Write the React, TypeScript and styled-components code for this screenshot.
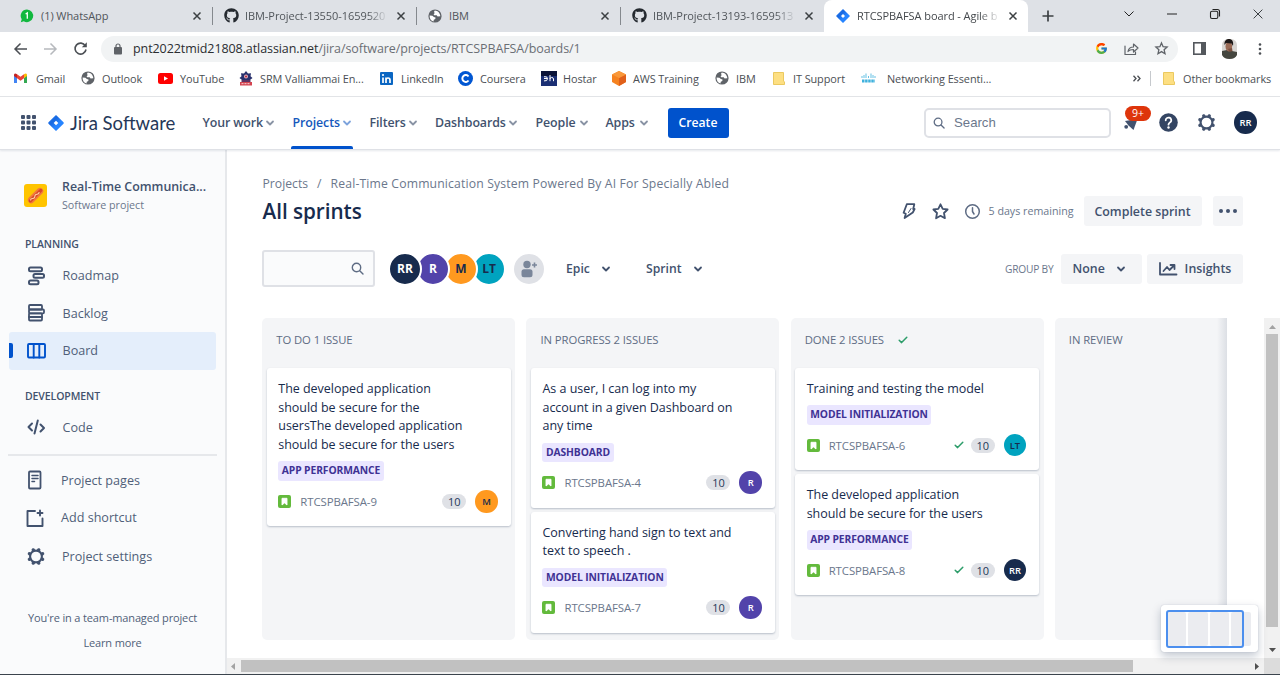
import React from "react";
import styled, { createGlobalStyle, css } from "styled-components";
import { FaGithub } from "react-icons/fa";
import { FcGoogle } from "react-icons/fc";

const navy = "#42526e";
const ink = "#172b4d";
const sans = `"Open Sans", "Noto Sans", sans-serif`;

const GlobalStyle = createGlobalStyle`
  *, *::before, *::after { box-sizing: border-box; }
  html, body { margin: 0; padding: 0; overflow: hidden; background: #fff; }
  body { font-family: ${sans}; font-size: 12.4px; color: ${ink}; }
  svg { display: block; flex: none; overflow: visible; }
`;

const Window = styled.div`
  width: 1280px;
  height: 675px;
  display: flex;
  flex-direction: column;
  border-bottom: 1px solid #3b444d;
  white-space: nowrap;
  overflow: hidden;
`;

/* ---------- browser chrome ---------- */

const TabStrip = styled.div`
  height: 32px;
  flex: none;
  background: #dee1e6;
  display: flex;
  align-items: stretch;
  padding-left: 8px;
`;

const Tab = styled.div<{ $active?: boolean; $sep?: boolean }>`
  width: 204px;
  display: flex;
  align-items: center;
  padding: 0 10px 1px 11px;
  color: #50555a;
  font-size: 11px;
  position: relative;
  ${(p) =>
    p.$active &&
    css`
      background: #fff;
      border-radius: 8px 8px 0 0;
      color: #45494d;
    `}
  ${(p) =>
    p.$sep &&
    css`
      &::after {
        content: "";
        position: absolute;
        right: -1px;
        top: 7px;
        width: 1px;
        height: 18px;
        background: #85898e;
      }
    `}
`;

const Favicon = styled.span`
  width: 16px;
  display: flex;
  justify-content: center;
  margin-right: 6px;
`;

const TabTitle = styled.span<{ $fade?: boolean }>`
  width: 146px;
  overflow: hidden;
  letter-spacing: -0.07px;
  ${(p) =>
    p.$fade &&
    css`
      mask-image: linear-gradient(90deg, #000 84%, transparent 98%);
    `}
`;

const TabClose = styled.span`
  margin-left: auto;
  padding-right: 1px;
`;

const NewTab = styled.span`
  margin-left: 14px;
  display: flex;
  align-items: center;
`;

const WindowControls = styled.div`
  margin-left: auto;
  width: 173px;
  height: 27px;
  display: flex;
  & > span {
    width: 43px;
    display: flex;
    align-items: center;
    justify-content: center;
  }
`;

const Toolbar = styled.div`
  height: 33px;
  flex: none;
  display: flex;
  align-items: center;
  padding-left: 12px;
`;

const ToolbarIcon = styled.span<{ $w: number }>`
  width: ${(p) => p.$w}px;
  display: flex;
  justify-content: center;
`;

const AddressBar = styled.div`
  width: 1077px;
  height: 26px;
  border-radius: 13px;
  background: #f1f3f4;
  display: flex;
  align-items: center;
  padding-left: 12px;
  margin-right: 6px;
`;

const Url = styled.span`
  margin-left: 10px;
  font-size: 12.5px;
  letter-spacing: -0.08px;
  color: #6b6f74;
  flex: 1;
  b {
    font-weight: 400;
    color: #2b2e31;
  }
`;

const BookmarksBar = styled.div`
  height: 32px;
  flex: none;
  display: flex;
  align-items: center;
  padding: 0 0 5px 12px;
  border-bottom: 1px solid #e3e5e8;
`;

const Bookmark = styled.div<{ $w: number; $gap?: number; $ls?: number }>`
  width: ${(p) => p.$w}px;
  display: flex;
  align-items: center;
  color: #4b4f54;
  font-size: 10.9px;
  letter-spacing: ${(p) => p.$ls ?? -0.08}px;
  & > span:first-child {
    width: 17px;
    display: flex;
    justify-content: center;
    margin-right: ${(p) => p.$gap ?? 6}px;
  }
`;

const BookmarkTail = styled.div`
  margin-left: auto;
  display: flex;
  align-items: center;
`;

const BarDivider = styled.i`
  width: 1px;
  height: 15px;
  background: #c6c9cd;
  margin: 0 9px 0 9px;
`;

/* ---------- product navigation ---------- */

const TopNav = styled.header`
  height: 53px;
  flex: none;
  display: flex;
  align-items: center;
  border-bottom: 1px solid #dfe1e6;
  box-shadow: 0 1px 2px rgba(9, 30, 66, 0.1);
  padding: 0 0 1px 21px;
  position: relative;
`;

const Logo = styled.div`
  display: flex;
  align-items: center;
  width: 154.5px;
  margin-left: 12px;
  font: 400 18.5px Lato, sans-serif;
  color: #253858;
  gap: 6px;
`;

const NavItem = styled.div<{ $w: number; $active?: boolean }>`
  width: ${(p) => p.$w}px;
  height: 100%;
  display: flex;
  align-items: center;
  font-weight: 600;
  font-size: 12.4px;
  letter-spacing: -0.1px;
  color: ${(p) => (p.$active ? "#1558bc" : "#42526e")};
  position: relative;
  svg {
    margin-left: auto;
  }
  ${(p) =>
    p.$active &&
    css`
      &::after {
        content: "";
        position: absolute;
        left: -2px;
        right: -2px;
        bottom: -1px;
        height: 3px;
        border-radius: 2px 2px 0 0;
        background: #0052cc;
      }
    `}
`;

const NavSlot = styled.div<{ $gap: number }>`
  height: 100%;
  margin-right: ${(p) => p.$gap}px;
`;

const CreateButton = styled.button`
  width: 61px;
  height: 30px;
  padding: 0;
  border: 0;
  border-radius: 3px;
  background: #0052cc;
  color: #fff;
  font: 600 12.2px ${sans};
`;

const GlobalSearch = styled.div`
  width: 187px;
  height: 30px;
  margin-left: auto;
  border: 2px solid #dfe1e6;
  border-radius: 5px;
  display: flex;
  align-items: center;
  gap: 9px;
  padding-left: 7px;
  font: 13.2px "Liberation Sans", Arial, sans-serif;
  color: #6b778c;
`;

const NavActions = styled.div`
  width: 169px;
  display: flex;
  align-items: center;
  padding-left: 1.5px;
`;

const NavAction = styled.span<{ $w?: number }>`
  width: ${(p) => p.$w ?? 37.5}px;
  display: flex;
  justify-content: center;
  position: relative;
`;

const Notice = styled.span`
  position: absolute;
  left: 12.5px;
  top: -8.5px;
  width: 26px;
  height: 15px;
  border-radius: 8px;
  background: #de350b;
  color: #fff;
  font-size: 10.5px;
  line-height: 15px;
  text-align: center;
`;

/* ---------- sidebar ---------- */

const Body = styled.div`
  flex: 1;
  min-height: 0;
  display: flex;
`;

const Sidebar = styled.aside`
  width: 227px;
  background: #fafbfc;
  border-right: 2px solid #e6e8eb;
  display: flex;
  flex-direction: column;
  padding-top: 26px;
`;

const ProjectHeader = styled.div`
  height: 38px;
  display: flex;
  align-items: center;
  padding-left: 24px;
  gap: 15px;
`;

const ProjectName = styled.div`
  line-height: 18px;
  padding-top: 2px;
  font-weight: 600;
  font-size: 12.4px;
  color: ${navy};
  small {
    display: block;
    font-weight: 400;
    font-size: 10.7px;
    color: #6b778c;
  }
`;

const SectionLabel = styled.div<{ $top: number }>`
  margin-top: ${(p) => p.$top}px;
  height: 18px;
  line-height: 18px;
  padding-left: 25px;
  font-size: 10.5px;
  font-weight: 600;
  color: ${navy};
  letter-spacing: -0.1px;
`;

const SideItem = styled.div<{ $active?: boolean; $first?: boolean; $indent?: number; $h?: number }>`
  height: ${(p) => p.$h ?? 37.5}px;
  margin: ${(p) => (p.$first ? 4 : 0)}px 9px 0;
  padding-left: 16px;
  display: flex;
  align-items: center;
  flex: none;
  font-size: 12.6px;
  color: #505f79;
  border-radius: 3px;
  position: relative;
  svg {
    width: 22px;
    margin-right: ${(p) => p.$indent ?? 15.5}px;
  }
  ${(p) =>
    p.$active &&
    css`
      background: #e4eefb;
      &::before {
        content: "";
        position: absolute;
        left: 0;
        top: 11px;
        width: 4px;
        height: 15px;
        border-radius: 0 2px 2px 0;
        background: #0052cc;
      }
    `}
`;

const SideRule = styled.hr`
  width: 209px;
  height: 2px;
  flex: none;
  margin: 7.5px 0 6px 8px;
  border: 0;
  background: #e6e8eb;
`;

const SideFooter = styled.div`
  margin-top: 28px;
  text-align: center;
  font-size: 11px;
  letter-spacing: -0.14px;
  line-height: 25px;
  color: #505f79;
`;

/* ---------- main area ---------- */

const Main = styled.main`
  flex: 1;
  min-width: 0;
  display: flex;
  flex-direction: column;
`;

const Breadcrumbs = styled.nav`
  height: 18px;
  margin: 24.5px 0 0 35.5px;
  line-height: 18px;
  font-size: 12.2px;
  color: #6b778c;
  i {
    font-style: normal;
    margin: 0 9px;
  }
`;

const ProjectCrumb = styled.span`
  letter-spacing: 0.16px;
`;

const TitleRow = styled.div`
  height: 37px;
  padding: 0 37px 0 35.5px;
  display: flex;
  align-items: center;
`;

const Title = styled.h1`
  margin: 0;
  flex: 1;
  font-size: 20.7px;
  font-weight: 600;
  letter-spacing: -0.03px;
  color: ${ink};
`;

const Remaining = styled.span`
  width: 95px;
  font-size: 10.7px;
  color: #6b778c;
`;

const SubtleButton = styled.button<{ $w: number; $ml?: number; $menu?: boolean }>`
  width: ${(p) => p.$w}px;
  height: 30px;
  margin-left: ${(p) => p.$ml ?? 0}px;
  padding: ${(p) => (p.$menu ? "0 17px 0 11.5px" : "0")};
  border: 0;
  border-radius: 3px;
  background: #f4f5f7;
  color: ${navy};
  font: 600 12.4px ${sans};
  display: flex;
  align-items: center;
  justify-content: ${(p) => (p.$menu ? "space-between" : "center")};
  gap: 8px;
`;

const FilterRow = styled.div`
  height: 38px;
  margin-top: 20px;
  padding: 0 37px 0 35px;
  display: flex;
  align-items: center;
`;

const FilterSearch = styled.div`
  width: 113px;
  height: 37px;
  border: 2px solid #dfe1e6;
  border-radius: 3px;
  background: #fafbfc;
  display: flex;
  align-items: center;
  justify-content: flex-end;
  padding-right: 9px;
  margin-right: 13px;
`;

const People = styled.div`
  display: flex;
  margin-right: 14px;
`;

const Person = styled.span<{ $bg: string; $dark?: boolean; $z: number }>`
  width: 34px;
  height: 34px;
  margin-right: -6px;
  border: 2px solid #fff;
  border-radius: 50%;
  background: ${(p) => p.$bg};
  color: ${(p) => (p.$dark ? ink : "#fff")};
  font-size: 12px;
  font-weight: 700;
  display: flex;
  align-items: center;
  justify-content: center;
  position: relative;
  z-index: ${(p) => p.$z};
`;

const AddPerson = styled.span`
  width: 30px;
  height: 30px;
  border-radius: 50%;
  background: #dfe1e6;
  display: flex;
  align-items: center;
  justify-content: center;
  margin-right: 22px;
`;

const FilterMenu = styled.div<{ $w: number }>`
  width: ${(p) => p.$w}px;
  margin-right: 36.5px;
  display: flex;
  align-items: center;
  justify-content: space-between;
  font-weight: 600;
  font-size: 12.2px;
  color: ${navy};
`;

const GroupBy = styled.span`
  margin-left: auto;
  font-size: 10.2px;
  letter-spacing: -0.2px;
  color: #6b778c;
  margin-right: 7.5px;
`;

/* ---------- board ---------- */

const BoardArea = styled.section`
  flex: 1;
  min-height: 0;
  margin-top: 30.5px;
  display: flex;
`;

const BoardScroll = styled.div`
  width: 1037px;
  display: flex;
  flex-direction: column;
  position: relative;
`;

const Columns = styled.div`
  width: 999.5px;
  height: 321.5px;
  padding-left: 35.3px;
  display: flex;
  gap: 11.2px;
  overflow: hidden;
  position: relative;
  &::after {
    content: "";
    position: absolute;
    right: 0;
    top: 0;
    bottom: 0;
    width: 10px;
    background: linear-gradient(90deg, rgba(9, 30, 66, 0), rgba(9, 30, 66, 0.1));
  }
`;

const Column = styled.div`
  width: 253px;
  flex: none;
  background: #f4f5f7;
  border-radius: 5px;
  padding: 0 4.5px;
`;

const ColumnTitle = styled.h2`
  margin: 0;
  height: 50px;
  padding: 0 0 7px 9.5px;
  display: flex;
  align-items: center;
  gap: 14px;
  font-size: 11.3px;
  font-weight: 500;
  letter-spacing: -0.08px;
  color: #5e6c84;
`;

const CardBox = styled.article`
  background: #fff;
  border-radius: 3px;
  box-shadow: 0 1px 2px rgba(9, 30, 66, 0.25);
  padding: 12px 13px 14px 11.5px;
  margin-bottom: 4px;
`;

const Summary = styled.div`
  font-size: 12.5px;
  line-height: 18.7px;
  letter-spacing: -0.03px;
  color: ${ink};
`;

const Epic = styled.div`
  width: fit-content;
  height: 19.5px;
  line-height: 19px;
  margin-top: 6.5px;
  padding: 0 3.5px;
  border-radius: 3px;
  background: #eae6ff;
  color: #403294;
  font-size: 10.3px;
  font-weight: 700;
  letter-spacing: -0.1px;
`;

const CardFooter = styled.div`
  height: 22px;
  margin-top: 9.5px;
  display: flex;
  align-items: center;
`;

const IssueKey = styled.span`
  margin-left: 9px;
  flex: 1;
  font-size: 11.4px;
  letter-spacing: -0.09px;
  color: #6b778c;
`;

const Points = styled.span`
  width: 24px;
  height: 15px;
  border-radius: 8px;
  background: #dfe1e6;
  font-size: 11px;
  line-height: 15px;
  text-align: center;
  margin: 0 9px 0 7px;
  color: #253858;
`;

const Assignee = styled.span<{ $bg: string; $dark?: boolean }>`
  width: 22.5px;
  height: 22.5px;
  border-radius: 50%;
  background: ${(p) => p.$bg};
  color: ${(p) => (p.$dark ? ink : "#fff")};
  font-size: 9.4px;
  font-weight: 600;
  display: flex;
  align-items: center;
  justify-content: center;
`;

const HScroll = styled.div`
  margin-top: auto;
  height: 16px;
  background: #f1f1f1;
  display: flex;
  align-items: center;
  padding: 0 5px 0 3px;
  i {
    width: 892px;
    height: 12px;
    background: #c1c1c1;
    margin: 0 auto 0 6px;
  }
`;

const VScroll = styled.div`
  width: 16px;
  display: flex;
  flex-direction: column;
  align-items: center;
  background: #f1f1f1;
  padding-top: 6px;
  i {
    width: 12px;
    height: 293px;
    background: #c1c1c1;
    margin: 5px 0 20px;
  }
  b {
    width: 16px;
    height: 16px;
    margin-top: auto;
    background: #dcdcdc;
  }
`;

const MiniMap = styled.div`
  position: absolute;
  left: 934px;
  top: 287px;
  width: 97px;
  height: 47px;
  border-radius: 3px;
  background: #fff;
  box-shadow: 0 4px 10px rgba(9, 30, 66, 0.25), 0 0 1px rgba(9, 30, 66, 0.3);
  display: flex;
  align-items: center;
  gap: 2px;
  padding-left: 5.5px;
  i {
    width: 19.6px;
    height: 34px;
    border-radius: 2px;
    background: #ebecf0;
  }
  &::after {
    content: "";
    position: absolute;
    left: 5px;
    top: 4.5px;
    width: 77.5px;
    height: 38px;
    border: 2px solid #4c8fee;
    border-radius: 3px;
  }
`;

/* ---------- icons ---------- */

const line = { fill: "none", stroke: "currentColor", strokeLinecap: "round", strokeLinejoin: "round" } as const;

const Cross = ({ s = 8, w = 1.5 }: { s?: number; w?: number }) => (
  <svg width={s} height={s} viewBox="0 0 8 8" fill="none" stroke="#3c4043" strokeWidth={w}>
    <path d="M.5.5l7 7M7.5.5l-7 7" />
  </svg>
);

const Chevron = ({ c = navy, w = 1.8, s = 8 }: { c?: string; w?: number; s?: number }) => (
  <svg width={s} height={s} viewBox="0 0 8 8" fill="none" stroke={c} strokeWidth={w} strokeLinecap="round" strokeLinejoin="round">
    <path d="M1 2.5L4 5.5L7 2.5" />
  </svg>
);

const Globe = () => (
  <svg width="14" height="14" viewBox="0 0 14 14">
    <circle cx="7" cy="7" r="6.6" fill="#5f6368" />
    <path d="M1.600 6.500l2.800.2 1.500 1.400 1.600.4-.2 1.500-1.500.8-.3 1.700C3 11.900 1.400 9.500 1.600 6.500z" fill="#fff" />
    <path d="M6.800 1.600l-.9 1.300.9 1-1.200 1.300.6 1 2.500.1.9 1.300 2.700-.3C12.200 4.500 9.900 1.600 6.800 1.600z" fill="#fff" />
  </svg>
);

const JiraMark = ({ s = 15 }: { s?: number }) => (
  <svg width={s} height={s} viewBox="0 0 16 16">
    <defs>
      <linearGradient id="jm" x1="0" y1="0" x2="1" y2="1">
        <stop offset="0" stopColor="#2684ff" />
        <stop offset=".35" stopColor="#1868e0" />
        <stop offset=".6" stopColor="#2684ff" />
      </linearGradient>
    </defs>
    <path fillRule="evenodd" fill="url(#jm)" d="M8 0L15.500 7.300a1 1 0 010 1.400L8 16L.5 8.700a1 1 0 010-1.400zM8 5.700L5.700 8L8 10.300L10.300 8z" />
  </svg>
);

const Folder = () => (
  <svg width="12" height="13" viewBox="0 0 12 13">
    <path d="M.5.5h10v8.500l1 1v2.500H.5z" fill="#fddf82" stroke="#e9c455" strokeWidth=".9" />
  </svg>
);

const Magnifier = ({ s = 13 }: { s?: number }) => (
  <svg width={s} height={s} viewBox="0 0 13 13" {...line} stroke="#5e6c84" strokeWidth="1.400">
    <circle cx="5.500" cy="5.500" r="4.200" />
    <path d="M8.700 8.700L12 12" />
  </svg>
);

const Gear = ({ s = 19 }: { s?: number }) => (
  <svg width={s} height={s} viewBox="0 0 20 20" fill="none" stroke={navy}>
    <circle cx="10" cy="10" r="6.200" strokeWidth="2.200" />
    <g strokeWidth="3.600" strokeLinecap="round">
      {[22.5, 67.5, 112.5, 157.5, 202.5, 247.5, 292.5, 337.5].map((a) => (
        <path key={a} d="M10 2.500v.3" transform={`rotate(${a} 10 10)`} />
      ))}
    </g>
  </svg>
);

const Story = () => (
  <svg width="13" height="13" viewBox="0 0 13 13">
    <rect width="13" height="13" rx="2" fill="#63ba3c" />
    <path d="M4 3.300h5v6.700L6.500 7.900L4 10z" fill="#fff" stroke="#fff" strokeWidth=".9" strokeLinejoin="round" />
  </svg>
);

const Check = () => (
  <svg width="10" height="8" viewBox="0 0 10 8" {...line} stroke="#2d9d6a" strokeWidth="1.500">
    <path d="M1.200 4.300L3.600 6.600L8.800 1.200" />
  </svg>
);

const Arrow = ({ dir, c }: { dir: "up" | "down" | "left" | "right"; c: string }) => {
  const d = { up: "M0 5h7L3.500 1z", down: "M0 1h7L3.500 5z", left: "M5 0v7L1 3.500z", right: "M1 0v7L5 3.500z" }[dir];
  const tall = dir === "left" || dir === "right";
  return (
    <svg width={tall ? 5 : 7} height={tall ? 7 : 5} fill={c}>
      <path d={d} />
    </svg>
  );
};

/* ---------- data ---------- */

type User = { initials: string; bg: string; dark?: boolean };
const users: Record<string, User> = {
  RR: { initials: "RR", bg: "#172b4d" },
  R: { initials: "R", bg: "#5243aa" },
  M: { initials: "M", bg: "#ff991f", dark: true },
  LT: { initials: "LT", bg: "#00a3bf", dark: true },
};

type Issue = { lines: string[]; epic: string; id: string; user: string; done?: boolean };
const columns: { title: string; done?: boolean; issues: Issue[] }[] = [
  {
    title: "TO DO 1 ISSUE",
    issues: [
      {
        lines: ["The developed application", "should be secure for the", "usersThe developed application", "should be secure for the users"],
        epic: "APP PERFORMANCE",
        id: "RTCSPBAFSA-9",
        user: "M",
      },
    ],
  },
  {
    title: "IN PROGRESS 2 ISSUES",
    issues: [
      { lines: ["As a user, I can log into my", "account in a given Dashboard on", "any time"], epic: "DASHBOARD", id: "RTCSPBAFSA-4", user: "R" },
      { lines: ["Converting hand sign to text and", "text to speech ."], epic: "MODEL INITIALIZATION", id: "RTCSPBAFSA-7", user: "R" },
    ],
  },
  {
    title: "DONE 2 ISSUES",
    done: true,
    issues: [
      { lines: ["Training and testing the model"], epic: "MODEL INITIALIZATION", id: "RTCSPBAFSA-6", user: "LT", done: true },
      { lines: ["The developed application", "should be secure for the users"], epic: "APP PERFORMANCE", id: "RTCSPBAFSA-8", user: "RR", done: true },
    ],
  },
  { title: "IN REVIEW", issues: [] },
];

const Card = ({ issue }: { issue: Issue }) => {
  const u = users[issue.user];
  return (
    <CardBox>
      {issue.lines.map((l) => (
        <Summary key={l}>{l}</Summary>
      ))}
      <Epic>{issue.epic}</Epic>
      <CardFooter>
        <Story />
        <IssueKey>{issue.id}</IssueKey>
        {issue.done && <Check />}
        <Points>10</Points>
        <Assignee $bg={u.bg} $dark={u.dark}>
          {u.initials}
        </Assignee>
      </CardFooter>
    </CardBox>
  );
};

const Browser = () => (
  <>
    <TabStrip>
      <Tab $sep>
        <Favicon>
          <svg width="14" height="14" viewBox="0 0 14 14">
            <path d="M7 .5a6.300 6.300 0 11-3.200 11.800L.8 13.200l.9-3A6.300 6.300 0 017 .5z" fill="#12b83f" />
            <path d="M5.600 5L7.300 4v5.800" fill="none" stroke="#fff" strokeWidth="1.300" />
          </svg>
        </Favicon>
        <TabTitle>(1) WhatsApp</TabTitle>
        <TabClose><Cross /></TabClose>
      </Tab>
      <Tab $sep>
        <Favicon><FaGithub size={15} color="#24292f" /></Favicon>
        <TabTitle $fade>IBM-Project-13550-1659520</TabTitle>
        <TabClose><Cross /></TabClose>
      </Tab>
      <Tab $sep>
        <Favicon><Globe /></Favicon>
        <TabTitle>IBM</TabTitle>
        <TabClose><Cross /></TabClose>
      </Tab>
      <Tab>
        <Favicon><FaGithub size={15} color="#24292f" /></Favicon>
        <TabTitle $fade>IBM-Project-13193-1659513</TabTitle>
        <TabClose><Cross /></TabClose>
      </Tab>
      <Tab $active>
        <Favicon><JiraMark s={14} /></Favicon>
        <TabTitle $fade>RTCSPBAFSA board - Agile b</TabTitle>
        <TabClose><Cross /></TabClose>
      </Tab>
      <NewTab>
        <svg width="12" height="12" stroke="#3c4043" strokeWidth="1.700"><path d="M6 .5v11M.5 6h11" /></svg>
      </NewTab>
      <WindowControls>
        <span><svg width="10" height="6" fill="none" stroke="#222" strokeWidth="1"><path d="M.5.5L5 5L9.500.5" /></svg></span>
        <span><svg width="10" height="2"><path d="M0 1h10" stroke="#222" /></svg></span>
        <span>
          <svg width="10" height="10" fill="none" stroke="#222" strokeWidth="1.100">
            <rect x=".5" y="2.200" width="7.300" height="7.300" rx="1.500" />
            <path d="M2.500.5h5a2 2 0 012 2v5" />
          </svg>
        </span>
        <span><Cross s={10} w={0.8} /></span>
      </WindowControls>
    </TabStrip>

    <Toolbar>
      <ToolbarIcon $w={17}>
        <svg width="13" height="12" fill="none" stroke="#4b4f54" strokeWidth="1.500"><path d="M13 6H1M6.500.5L1 6l5.500 5.500" /></svg>
      </ToolbarIcon>
      <ToolbarIcon $w={43}>
        <svg width="13" height="12" fill="none" stroke="#b6b9bd" strokeWidth="1.500"><path d="M0 6h12M6.500.5L12 6l-5.500 5.500" /></svg>
      </ToolbarIcon>
      <ToolbarIcon $w={17}>
        <svg width="13" height="13" fill="none" stroke="#4b4f54" strokeWidth="1.600">
          <path d="M11.300 3.800A5.500 5.500 0 1012 7.500" />
          <path d="M12.800.3v5H7.800z" fill="#4b4f54" stroke="none" />
        </svg>
      </ToolbarIcon>
      <ToolbarIcon $w={12} />
      <AddressBar>
        <svg width="10" height="12" fill="#5f6368">
          <rect x="1" y="4" width="8" height="7.500" rx="1" />
          <path d="M3 5V3a2 2 0 014 0v2" fill="none" stroke="#5f6368" strokeWidth="1.200" />
        </svg>
        <Url><b>pnt2022tmid21808.atlassian.net</b>/jira/software/projects/RTCSPBAFSA/boards/1</Url>
        <ToolbarIcon $w={30}><FcGoogle size={13} /></ToolbarIcon>
        <ToolbarIcon $w={30}>
          <svg width="15" height="14" {...line} stroke="#5f6368" strokeWidth="1.200">
            <path d="M1 4v8.500h10.500V10M4 9.500C4.500 6.500 6.500 5 9.500 5V2l4.500 4-4.500 4V7.500C7 7.500 5.200 8 4 9.500z" />
          </svg>
        </ToolbarIcon>
        <ToolbarIcon $w={30}>
          <svg width="13" height="13" viewBox="0 0 13 13" fill="none" stroke="#5f6368" strokeWidth="1.300">
            <path d="M6.500 1l1.600 3.700 4 .3-3 2.700.9 4-3.500-2.100L3 11.700l.9-4L.9 5l4-.3z" />
          </svg>
        </ToolbarIcon>
        <ToolbarIcon $w={2} />
      </AddressBar>
      <ToolbarIcon $w={30}>
        <svg width="13" height="13"><rect x=".8" y=".8" width="11.400" height="11.400" fill="#fff" stroke="#54585d" strokeWidth="1.600" /><path d="M8 0h5v13H8z" fill="#54585d" /></svg>
      </ToolbarIcon>
      <ToolbarIcon $w={30}>
        <svg width="15" height="20" viewBox="0 0 15 20">
          <rect width="15" height="20" rx="6" fill="#d8d5d2" />
          <path d="M0 12l5-1 5 1 5 1v3q-2 4-7.500 4T0 16z" fill="#45463f" />
          <ellipse cx="6.800" cy="7.500" rx="3.300" ry="5" fill="#9a6a55" />
          <path d="M2.500 6C2 1 5 0 7 0s5 1 4 7L9.500 4.500 4 4z" fill="#1d1817" />
          <path d="M6 10l4-1 .5 3-3 1z" fill="#7b5040" />
        </svg>
      </ToolbarIcon>
      <ToolbarIcon $w={32}>
        <svg width="4" height="14" fill="#4b4f54"><circle cx="2" cy="2.500" r="1.300" /><circle cx="2" cy="7" r="1.300" /><circle cx="2" cy="11.500" r="1.300" /></svg>
      </ToolbarIcon>
    </Toolbar>

    <BookmarksBar>
      <Bookmark $w={67} $gap={7}>
        <span>
          <svg width="13" height="10" viewBox="0 0 13 10">
            <path d="M0 1.500V10h3V5z" fill="#4285f4" /><path d="M13 1.500V10h-3V5z" fill="#34a853" />
            <path d="M3 1.200l3.500 2.600L10 1.200v4L6.500 7.800L3 5.200z" fill="#ea4335" />
            <path d="M0 1.500Q.8-.5 3 1.200v4L0 3z" fill="#c5221f" /><path d="M13 1.500Q12.200-.5 10 1.200v4L13 3z" fill="#fbbc04" />
          </svg>
        </span>
        Gmail
      </Bookmark>
      <Bookmark $w={78}><span><Globe /></span>Outlook</Bookmark>
      <Bookmark $w={80}>
        <span><svg width="15" height="11"><rect width="15" height="11" rx="2.500" fill="#f00" /><path d="M6 3.200v4.600l4-2.300z" fill="#fff" /></svg></span>
        YouTube
      </Bookmark>
      <Bookmark $w={141}>
        <span>
          <svg width="14" height="15" viewBox="0 0 14 15">
            <path d="M7 0l2 2.500 3-.3-.5 3L13.500 7 11 9H3L.5 7l2-1.800-.5-3 3 .3z" fill="#28306d" />
            <circle cx="7" cy="5.500" r="2" fill="#e8b7bd" /><circle cx="7" cy="5.500" r="1" fill="#b0203c" />
            <path d="M2.500 9h9v2h-9z" fill="#5c3566" /><path d="M1 11h12v3.500H1z" fill="#d44450" />
            <path d="M2.500 12.700h9" stroke="#fff" strokeWidth=".8" strokeDasharray="2 1" />
          </svg>
        </span>
        SRM Valliammai En...
      </Bookmark>
      <Bookmark $w={79}>
        <span>
          <svg width="13" height="13" viewBox="0 0 13 13">
            <rect width="13" height="13" rx="1" fill="#0a66c2" />
            <path d="M3 5.500V11M6 11V5.500M6 8q0-2 2-2t2 2v3" fill="none" stroke="#fff" strokeWidth="1.700" /><circle cx="3" cy="3" r="1.100" fill="#fff" />
          </svg>
        </span>
        LinkedIn
      </Bookmark>
      <Bookmark $w={83}>
        <span><svg width="15" height="15"><circle cx="7.500" cy="7.500" r="7.500" fill="#0056d2" /><path d="M10.500 5.500a3.400 3.400 0 100 4" fill="none" stroke="#fff" strokeWidth="2" /></svg></span>
        Coursera
      </Bookmark>
      <Bookmark $w={70}>
        <span>
          <svg width="16" height="15">
            <rect width="16" height="15" fill="#1b2f74" /><rect width="16" height="5" fill="#0b1438" />
            <path d="M3 7.500h3.500M3 5.700q3.500-.6 3.500 2t-3.500 2.200M9 4v6.200M9 8q0-1.500 1.700-1.500T12.500 8v2.200" fill="none" stroke="#fff" strokeWidth="1" />
          </svg>
        </span>
        Hostar
      </Bookmark>
      <Bookmark $w={103} $ls={-0.11}>
        <span>
          <svg width="14" height="15" viewBox="0 0 14 15"><path d="M7 0l7 3.500v7.500L7 15 0 11V3.500z" fill="#f58220" /><path d="M7 7l7-3.500V11l-7 4z" fill="#e0601b" /><path d="M7 0l7 3.500L7 7 0 3.500z" fill="#f9983a" /></svg>
        </span>
        AWS Training
      </Bookmark>
      <Bookmark $w={57}><span><Globe /></span>IBM</Bookmark>
      <Bookmark $w={90}><span><Folder /></span>IT Support</Bookmark>
      <Bookmark $w={140} $gap={10}>
        <span>
          <svg width="15" height="10" fill="none" stroke="#3fb1dd"><path d="M1 3v2M3 2v3M5 .5V5M7.500 3v2M10 .5V5M12 2v3M14 3v2" strokeWidth="1" opacity=".8" /><path d="M1 8h13" strokeWidth="3" strokeDasharray="2.500 .6" /></svg>
        </span>
        Networking Essenti...
      </Bookmark>
      <BookmarkTail>
        <svg width="8" height="7" fill="none" stroke="#4b4f54" strokeWidth="1.300"><path d="M.5.8L3 3.500L.5 6.200M4.500.8L7 3.500L4.500 6.200" /></svg>
        <BarDivider />
        <Bookmark $w={120} $gap={6}><span><Folder /></span>Other bookmarks</Bookmark>
      </BookmarkTail>
    </BookmarksBar>
  </>
);

const navItems: [string, number, number][] = [
  ["Your work", 71, 19],
  ["Projects", 58, 19],
  ["Filters", 47, 18.5],
  ["Dashboards", 82, 18.5],
  ["People", 52, 18],
  ["Apps", 42, 20],
];

export default function App() {
  return (
    <Window>
      <GlobalStyle />
      <Browser />
      <TopNav>
        <svg width="15" height="15" fill={navy}>
          {[0, 5.5, 11].map((y) => [0, 5.5, 11].map((x) => <rect key={`${x}-${y}`} x={x} y={y} width="4" height="4" rx="1" />))}
        </svg>
        <Logo>
          <JiraMark s={16} />
          Jira Software
        </Logo>
        {navItems.map(([t, w, g], i) => (
          <NavSlot key={t} $gap={g}>
            <NavItem $w={w} $active={i === 1}>
              {t}
              <Chevron c={i === 1 ? "#7da3dc" : "#8993a4"} />
            </NavItem>
          </NavSlot>
        ))}
        <CreateButton>Create</CreateButton>
        <GlobalSearch>
          <Magnifier s={12} />
          Search
        </GlobalSearch>
        <NavActions>
          <NavAction>
            <svg width="16" height="16" viewBox="0 0 16 16" fill={navy}><path d="M2 6L14.500 4L10.500 15L5.500 10.500z" /><circle cx="3.200" cy="11.800" r="1.900" /></svg>
            <Notice>9+</Notice>
          </NavAction>
          <NavAction>
            <svg width="19" height="19" viewBox="0 0 19 19">
              <circle cx="9.500" cy="9.500" r="9.300" fill="#344563" />
              <path d="M6.700 7.300a2.800 2.600 0 115 1.500c-.7 1-2.200 1.200-2.200 2.900" fill="none" stroke="#fff" strokeWidth="1.800" strokeLinecap="round" />
              <circle cx="9.500" cy="14.500" r="1.200" fill="#fff" />
            </svg>
          </NavAction>
          <NavAction><Gear /></NavAction>
          <NavAction $w={41}>
            <Assignee $bg="#172b4d">RR</Assignee>
          </NavAction>
        </NavActions>
      </TopNav>

      <Body>
        <Sidebar>
          <ProjectHeader>
            <svg width="23" height="23" viewBox="0 0 23 23">
              <rect width="23" height="23" rx="3" fill="#ffc400" />
              <g transform="rotate(-45 11.500 11.500)">
                <rect x="2" y="8.300" width="19" height="6.600" rx="3.300" fill="#f27a3c" />
                <rect x="2.500" y="10" width="18" height="3.200" rx="1.600" fill="#d9472b" />
                <path d="M4.500 11.600q1.500-1.500 3 0t3 0t3 0t3 0" fill="none" stroke="#ffd9a8" strokeWidth="1" />
              </g>
            </svg>
            <ProjectName>
              Real-Time Communica...
              <small>Software project</small>
            </ProjectName>
          </ProjectHeader>
          <SectionLabel $top={21}>PLANNING</SectionLabel>
          <SideItem $first>
            <svg width="22" height="20" viewBox="0 0 22 20" {...line} stroke={navy} strokeWidth="2">
              <rect x="4" y="1.500" width="13" height="3.800" rx="1.500" /><rect x="8.500" y="8" width="10.500" height="3.800" rx="1.500" /><rect x="4" y="14.500" width="9.500" height="3.800" rx="1.500" />
            </svg>
            Roadmap
          </SideItem>
          <SideItem>
            <svg width="22" height="18" viewBox="0 0 22 18" {...line} stroke={navy} strokeWidth="1.800">
              <rect x="4" y="1" width="13" height="4.500" rx="1" /><rect x="4" y="5.500" width="15" height="3.800" rx="1" /><rect x="4" y="9.300" width="13" height="7.200" rx="1" /><path d="M4 13h13" />
            </svg>
            Backlog
          </SideItem>
          <SideItem $active>
            <svg width="22" height="16" viewBox="0 0 22 16" {...line} stroke="#0052cc" strokeWidth="1.900">
              <rect x="3" y="1" width="17" height="13.500" rx="1" /><path d="M8.700 1v13.500M14.300 1v13.500" />
            </svg>
            Board
          </SideItem>
          <SectionLabel $top={17}>DEVELOPMENT</SectionLabel>
          <SideItem $first>
            <svg width="22" height="16" viewBox="0 0 22 16" {...line} stroke={navy} strokeWidth="2">
              <path d="M7 4.500L3.500 8L7 11.500M15.500 5.500L19 9L15.500 12.500M12.800 1.500L9.500 14.500" />
            </svg>
            Code
          </SideItem>
          <SideRule />
          <SideItem $indent={14}>
            <svg width="22" height="20" viewBox="0 0 22 20" {...line} stroke={navy} strokeWidth="1.800">
              <rect x="4" y="1.500" width="11.500" height="17" rx="1" /><path d="M7 5.500h6M7 8.500h6M7 11.500h2.500" strokeWidth="1.500" />
            </svg>
            Project pages
          </SideItem>
          <SideItem $indent={14}>
            <svg width="22" height="18" viewBox="0 0 22 18" {...line} stroke={navy} strokeWidth="1.900">
              <path d="M10 2H2.500V17H17.500V9.500" /><path d="M15 1.500v5M12.500 4h5" />
            </svg>
            Add shortcut
          </SideItem>
          <SideItem $indent={15} $h={40}>
            <Gear />
            Project settings
          </SideItem>
          <SideFooter>
            <div>You're in a team-managed project</div>
            <div>Learn more</div>
          </SideFooter>
        </Sidebar>

        <Main>
          <Breadcrumbs>
            Projects<i>/</i>
            <ProjectCrumb>Real-Time Communication System Powered By AI For Specially Abled</ProjectCrumb>
          </Breadcrumbs>
          <TitleRow>
            <Title>All sprints</Title>
            <ToolbarIcon $w={32}>
              <svg width="14" height="16" viewBox="0 0 14 16" {...line} stroke={navy} strokeWidth="1.800">
                <path d="M4.800 1.200H12.300L11.200 6H12.600L10.800 9.500L2.600 15L3.800 10.700L1.600 9.700z" />
                <path d="M9 5.500L6.500 9.500" strokeWidth="1" />
              </svg>
            </ToolbarIcon>
            <ToolbarIcon $w={32}>
              <svg width="17" height="17" viewBox="0 0 17 17" {...line} stroke={navy} strokeWidth="1.800">
                <path d="M8.500 1.300L10.700 5.800L15.600 6.500L12 10L12.900 15.200L8.500 12.800L4.100 15.200L5 10L1.400 6.500L6.300 5.800z" />
              </svg>
            </ToolbarIcon>
            <ToolbarIcon $w={32}>
              <svg width="15" height="15" {...line} stroke="#5e6c84" strokeWidth="1.500"><circle cx="7.500" cy="7.500" r="6.800" /><path d="M7.500 3.800V7.500L9 10" /></svg>
            </ToolbarIcon>
            <Remaining>5 days remaining</Remaining>
            <SubtleButton $w={118}>Complete sprint</SubtleButton>
            <SubtleButton $w={30} $ml={11.5}>
              <svg width="18" height="4" fill={navy}><circle cx="2" cy="2" r="2" /><circle cx="9" cy="2" r="2" /><circle cx="16" cy="2" r="2" /></svg>
            </SubtleButton>
          </TitleRow>
          <FilterRow>
            <FilterSearch><Magnifier /></FilterSearch>
            <People>
              {["RR", "R", "M", "LT"].map((k, i) => (
                <Person key={k} $bg={users[k].bg} $dark={users[k].dark} $z={4 - i}>{k}</Person>
              ))}
            </People>
            <AddPerson>
              <svg width="18" height="18" viewBox="0 0 18 18" fill="#7a869a">
                <circle cx="7" cy="4.500" r="3.700" /><rect x="1.500" y="9.200" width="11" height="8" rx="2.500" /><path d="M14.500 2.500v5M12 5h5" stroke="#7a869a" strokeWidth="1.600" />
              </svg>
            </AddPerson>
            <FilterMenu $w={43.5}>Epic<Chevron /></FilterMenu>
            <FilterMenu $w={55.5}>Sprint<Chevron /></FilterMenu>
            <GroupBy>GROUP BY</GroupBy>
            <SubtleButton $w={81} $menu>None<Chevron /></SubtleButton>
            <SubtleButton $w={96} $ml={5}>
              <svg width="18" height="14" viewBox="0 0 18 14" {...line} stroke={navy} strokeWidth="1.800"><path d="M1 1v11.500h16.500M4.500 9L8 5l2.500 3L15 3.500M11.500 3H15.500V7" /></svg>
              Insights
            </SubtleButton>
          </FilterRow>

          <BoardArea>
            <BoardScroll>
              <Columns>
                {columns.map((c) => (
                  <Column key={c.title}>
                    <ColumnTitle>
                      {c.title}
                      {c.done && <Check />}
                    </ColumnTitle>
                    {c.issues.map((i) => (
                      <Card key={i.id} issue={i} />
                    ))}
                  </Column>
                ))}
              </Columns>
              <MiniMap>
                <i /><i /><i /><i />
              </MiniMap>
              <HScroll>
                <Arrow dir="left" c="#a3a3a3" />
                <i />
                <Arrow dir="right" c="#505050" />
              </HScroll>
            </BoardScroll>
            <VScroll>
              <Arrow dir="up" c="#a3a3a3" />
              <i />
              <Arrow dir="down" c="#505050" />
              <b />
            </VScroll>
          </BoardArea>
        </Main>
      </Body>
    </Window>
  );
}
